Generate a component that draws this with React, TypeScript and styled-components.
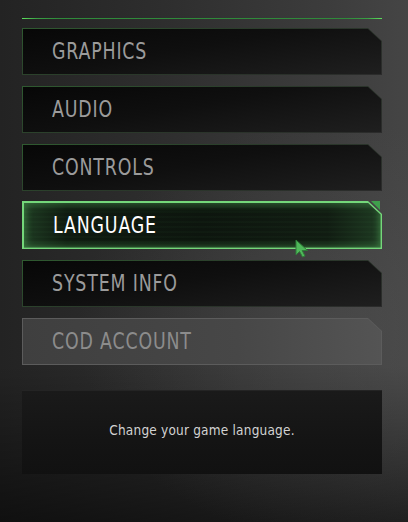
import React from "react";
import styled, { createGlobalStyle, css } from "styled-components";

const Global = createGlobalStyle`
  html, body { margin: 0; padding: 0; }
  body {
    width: 408px;
    height: 522px;
    overflow: hidden;
    background:
      radial-gradient(ellipse 360px 300px at 330px 330px, rgba(90,90,90,0.35), rgba(90,90,90,0) 70%),
      linear-gradient(to bottom, rgba(0,0,0,0) 70%, rgba(0,0,0,0.55) 100%),
      linear-gradient(to right, #232323 0%, #2e2e2e 40%, #3c3c3c 80%, #454545 100%);
    font-family: "DejaVu Sans Condensed", "DejaVu Sans", sans-serif;
  }
`;

const Page = styled.div`
  display: flex;
  flex-direction: column;
  padding: 18px 26px 0 22px;
  width: 360px;
`;

const TopLine = styled.div`
  height: 1px;
  margin-bottom: 9px;
  background: linear-gradient(to right, #5ee05e 0%, #3aa044 4%, #2f8a3a 10%, #2f8a3a 90%, #3aa044 96%, #5ee05e 100%);
`;

const Menu = styled.div`
  display: flex;
  flex-direction: column;
  gap: 11px;
`;

const cut = (n: number) =>
  `polygon(0 0, calc(100% - ${n}px) 0, 100% ${n - 1}px, 100% 100%, 0 100%)`;

type Variant = "normal" | "active" | "disabled";

const Item = styled.div<{ $v: Variant }>`
  position: relative;
  height: 47px;
  padding: 1px;
  box-sizing: border-box;
  clip-path: ${cut(14)};
  ${({ $v }) =>
    $v === "normal" &&
    css`
      background: linear-gradient(165deg, #2f5a30 0%, #2a3a2a 45%, #2b2b2b 100%);
    `}
  ${({ $v }) =>
    $v === "active" &&
    css`
      height: 48px;
      margin-top: -1px;
      padding: 1.5px;
      background: #74d77a;
    `}
  ${({ $v }) =>
    $v === "disabled" &&
    css`
      background: #5c5c5c;
    `}
`;

const Face = styled.div<{ $v: Variant }>`
  height: 100%;
  display: flex;
  align-items: center;
  padding-left: 29px;
  clip-path: ${cut(13)};
  font-size: 23px;
  ${({ $v }) =>
    $v === "normal" &&
    css`
      background: linear-gradient(170deg, #070707 0%, #0f0f0f 45%, #1f1f1f 100%);
      color: #9b9b9b;
    `}
  ${({ $v }) =>
    $v === "active" &&
    css`
      color: #ffffff;
      background:
        repeating-linear-gradient(to bottom, rgba(80,170,90,0) 0px, rgba(80,170,90,0) 3px, rgba(80,170,90,0.07) 4px, rgba(80,170,90,0) 5px),
        linear-gradient(to right, #1e3a22 0%, #0f1a10 12%, #0d150e 50%, #111c12 85%, #1e3a22 100%);
      box-shadow: inset 0 0 7px 2px rgba(90,190,100,0.45);
    `}
  ${({ $v }) =>
    $v === "disabled" &&
    css`
      color: #8c8c8c;
      background: linear-gradient(to right, #3f3f3f 0%, #474747 60%, #545454 100%);
    `}
`;

const Label = styled.span`
  line-height: 1;
  letter-spacing: 1px;
  transform: scaleX(0.84);
  transform-origin: left center;
  white-space: nowrap;
`;

const ActiveWrap = styled.div`
  position: relative;
`;

const CornerTick = styled.div`
  position: absolute;
  top: -1px;
  right: 2px;
  width: 9px;
  height: 9px;
  background: #3f9f4c;
  clip-path: polygon(0 0, 100% 0, 100% 100%);
`;

const Cursor = styled.svg`
  position: absolute;
  left: 273px;
  top: 37px;
  width: 14px;
  height: 19px;
`;

const InfoBox = styled.div`
  margin-top: 25px;
  height: 84px;
  box-sizing: border-box;
  border-top: 1px solid #242424;
  background: linear-gradient(to bottom, #1a1a1a 0%, #141414 60%, #111 100%);
  display: flex;
  align-items: center;
  justify-content: center;
  padding-bottom: 5px;
  color: #d2d2d2;
  font-size: 13.5px;
  letter-spacing: 0.2px;
`;

const items: { label: string; v: Variant }[] = [
  { label: "GRAPHICS", v: "normal" },
  { label: "AUDIO", v: "normal" },
  { label: "CONTROLS", v: "normal" },
  { label: "LANGUAGE", v: "active" },
  { label: "SYSTEM INFO", v: "normal" },
  { label: "COD ACCOUNT", v: "disabled" },
];

export default function App() {
  return (
    <>
      <Global />
      <Page>
        <TopLine />
        <Menu>
          {items.map((it) =>
            it.v === "active" ? (
              <ActiveWrap key={it.label}>
                <Item $v={it.v}>
                  <Face $v={it.v}>
                    <Label>{it.label}</Label>
                  </Face>
                </Item>
                <CornerTick />
                <Cursor viewBox="0 0 14 19">
                  <path d="M1 1 L1 16 L4.5 12.5 L7.5 18 L10 17 L7.2 11.5 L12.5 11.5 Z" fill="#4fb85a" stroke="#2f7a38" strokeWidth="1" />
                </Cursor>
              </ActiveWrap>
            ) : (
              <Item key={it.label} $v={it.v}>
                <Face $v={it.v}>
                  <Label>{it.label}</Label>
                </Face>
              </Item>
            )
          )}
        </Menu>
        <InfoBox>Change your game language.</InfoBox>
      </Page>
    </>
  );
}
